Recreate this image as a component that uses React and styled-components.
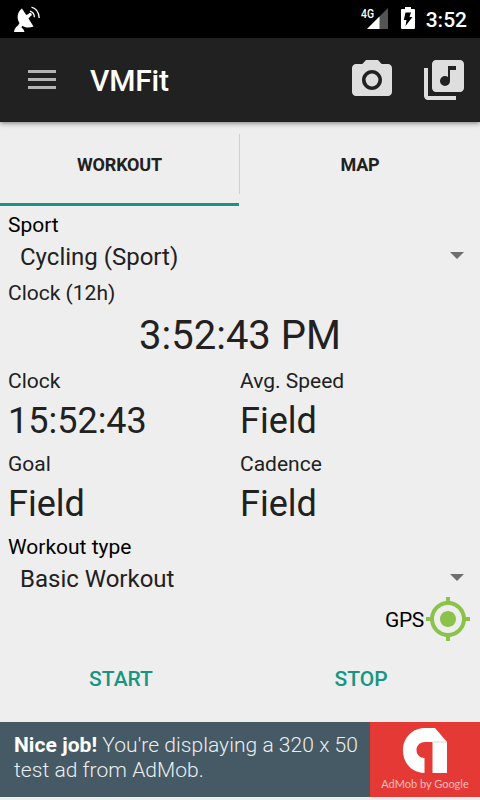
import React, { Component } from 'react';
import styled, { createGlobalStyle } from 'styled-components';
import { MdCameraAlt, MdLibraryMusic, MdGpsFixed } from 'react-icons/md';

const GlobalStyle = createGlobalStyle`
  * {
    box-sizing: border-box;
  }

  body {
    margin: 0;
    background: #eeeeee;
    color: #212121;
    font-family: Roboto, "Liberation Sans", sans-serif;
  }

  svg {
    display: block;
    flex: none;
  }
`;

const Screen = styled.div`
  width: 480px;
  height: 800px;
  display: flex;
  flex-direction: column;
  overflow: hidden;
`;

const StatusBar = styled.div`
  height: 38px;
  flex: none;
  display: flex;
  align-items: center;
  justify-content: space-between;
  padding: 0 13px 0 13px;
  background: #000;
`;

const StatusIcons = styled.div`
  display: flex;
  align-items: center;
`;

const Battery = styled.div`
  margin: 0 11px 0 12px;
  padding-bottom: 2px;
`;

const Time = styled.span`
  padding-top: 2px;
  color: #fff;
  font-size: 21px;
  font-weight: 500;
  line-height: 24px;
`;

const Toolbar = styled.header`
  height: 84px;
  flex: none;
  display: flex;
  align-items: center;
  padding: 0 12px 0 28px;
  background: #212121;
  box-shadow: 0 1px 5px rgba(0, 0, 0, .5);
`;

const MenuButton = styled.div`
  width: 28px;
  height: 20px;
  display: flex;
  flex-direction: column;
  justify-content: space-between;
  padding-bottom: 1px;
`;

const MenuLine = styled.span`
  height: 3px;
  background: #b4b4b4;
`;

const Title = styled.h1`
  flex: 1;
  margin: 0 0 0 34px;
  padding-top: 2px;
  color: #fff;
  font-size: 30px;
  font-weight: 500;
  letter-spacing: -.2px;
  line-height: 36px;
`;

const Actions = styled.div`
  display: flex;
  gap: 24px;
  color: #dedede;
`;

const Tabs = styled.nav`
  height: 84px;
  flex: none;
  display: flex;
`;

const Tab = styled.div`
  flex: ${({ active }) => ( active ? '0 0 239px' : 1 )};
  display: flex;
  align-items: center;
  justify-content: center;
  padding-top: ${({ active }) => ( active ? 4 : 1 )}px;
  border-bottom: ${({ active }) => ( active ? '3px solid #179482' : 'none' )};
  font-size: 18px;
  font-weight: 700;
  letter-spacing: -.2px;
`;

const TabDivider = styled.div`
  width: 1px;
  height: 60px;
  margin-top: 12px;
  background: #cfcfcf;
`;

const Content = styled.main`
  flex: 1;
  padding: 5px 8px 0;
`;

const Label = styled.div`
  color: ${({ $strong }) => ( $strong ? '#000' : '#212121' )};
  font-size: 21px;
  line-height: ${({ $height }) => $height || 28}px;
`;

const Spinner = styled.div`
  height: 36px;
  display: flex;
  align-items: center;
  justify-content: space-between;
  padding: 0 8px 0 12px;
  font-size: 24px;
  line-height: 36px;
`;

const Arrow = styled.span`
  margin-bottom: 3px;
  border: 7px solid transparent;
  border-top-color: #6f6f6f;
  border-bottom: 0;
`;

const MainValue = styled.div`
  font-size: 40px;
  line-height: 49px;
  text-align: center;
`;

const Fields = styled.div`
  display: grid;
  grid-template-columns: 232px 232px;
  row-gap: 3px;
  padding: 6px 0 4px;
`;

const FieldValue = styled.div`
  font-size: 36px;
  line-height: 50px;
`;

const GpsRow = styled.div`
  height: 44px;
  display: flex;
  align-items: center;
  justify-content: flex-end;
  color: #8bc34a;
`;

const GpsLabel = styled(Label)`
  padding-top: 2px;
  letter-spacing: -.3px;
`;

const Buttons = styled.div`
  display: flex;
  margin: 14px -9px 0 -7px;
`;

const Button = styled.button`
  flex: 1;
  height: 48px;
  padding: 0;
  border: 0;
  background: none;
  color: #179482;
  font-family: inherit;
  font-size: 21px;
  font-weight: 500;
  cursor: pointer;
`;

const Ad = styled.div`
  height: 75px;
  flex: none;
  display: flex;
  margin-bottom: 3px;
  background: #455a64;
`;

const AdText = styled.p`
  flex: 1;
  margin: 0;
  padding: 11px 0 0 14px;
  color: #eceff1;
  font-size: 21px;
  font-weight: 300;
  letter-spacing: .05px;
  line-height: 25px;
  white-space: nowrap;

  b {
    color: #fff;
    font-weight: 700;
  }
`;

const AdLogo = styled.div`
  width: 110px;
  display: flex;
  flex-direction: column;
  align-items: center;
  padding-top: 5px;
  background: #e53935;
  color: #f8bfbd;
  font-family: Lato, sans-serif;
  font-size: 11px;
  line-height: 14px;
  white-space: nowrap;

  svg {
    margin-bottom: 4px;
  }
`;

const SatelliteIcon = () => (
  <svg width="28" height="28" viewBox="0 0 28 28" fill="#fff">
    <path d="M9 3.500C4 7 3.500 13.500 6.500 18L5 20.500Q1.500 22.500 1 27H11.500Q11 24 8.500 22.500L9.300 20.800C12 22.800 16.500 23.200 20.500 21.500L15.500 13.500L17.500 11.200A1.700 1.700 0 1 0 15.500 9L13.200 10Z" />
    <path d="M17 6.200Q21.200 7.500 21.400 12.200M18.500 2.200Q25.500 4 26.200 13" fill="none" stroke="#fff" strokeWidth="1.300" />
  </svg>
);

const SignalIcon = () => (
  <svg width="28" height="24" viewBox="0 0 28 24">
    <path d="M27 1V22H6Z" fill="#545454" />
    <path d="M18.500 9.500V22H6Z" fill="#fff" />
    <text x="0" y="10.500" fill="#fff" fontSize="12.500" fontWeight="500" textLength="13" lengthAdjust="spacingAndGlyphs">4G</text>
  </svg>
);

const BatteryIcon = () => (
  <svg width="14" height="22" viewBox="0 0 14 22">
    <path d="M4 0H10V2H13Q14 2 14 3V21Q14 22 13 22H1Q0 22 0 21V3Q0 2 1 2H4Z" fill="#fff" />
    <path d="M4.500 5.500H10L8.500 10H11.500L4.500 19L5.500 13H2.800Z" fill="#000" />
  </svg>
);

const AdMobIcon = () => (
  <svg width="46" height="46" viewBox="0 0 46 46">
    <path d="M23 1H33L45 15V46H30.500V15H23.500C18 15 14.500 18.500 14.500 23C14.500 27.500 18 31 22.500 31V46C9 45.500 1 35.500 1 23.500C1 10.500 10.500 1 23 1Z" fill="#fff" />
    <path d="M30.500 15H44" stroke="#d8d8d8" strokeWidth="1" />
  </svg>
);

const fields = [
  { label: 'Clock', value: '15:52:43' },
  { label: 'Avg. Speed', value: 'Field' },
  { label: 'Goal', value: 'Field' },
  { label: 'Cadence', value: 'Field' },
];

class App extends Component {
  render() {
    return (
      <Screen>
        <GlobalStyle />
        <StatusBar>
          <SatelliteIcon />
          <StatusIcons>
            <SignalIcon />
            <Battery>
              <BatteryIcon />
            </Battery>
            <Time>3:52</Time>
          </StatusIcons>
        </StatusBar>
        <Toolbar>
          <MenuButton>
            <MenuLine />
            <MenuLine />
            <MenuLine />
          </MenuButton>
          <Title>VMFit</Title>
          <Actions>
            <MdCameraAlt size={48} />
            <MdLibraryMusic size={48} />
          </Actions>
        </Toolbar>
        <Tabs>
          <Tab active>WORKOUT</Tab>
          <TabDivider />
          <Tab>MAP</Tab>
        </Tabs>
        <Content>
          <Label $strong>Sport</Label>
          <Spinner>Cycling (Sport)<Arrow /></Spinner>
          <Label $height={36}>Clock (12h)</Label>
          <MainValue>3:52:43 PM</MainValue>
          <Fields>
            {
              fields.map(({ label, value }) => (
                <div key={label}>
                  <Label $height={30}>{label}</Label>
                  <FieldValue>{value}</FieldValue>
                </div>
              ))
            }
          </Fields>
          <Label $strong>Workout type</Label>
          <Spinner>Basic Workout<Arrow /></Spinner>
          <GpsRow>
            <GpsLabel $strong $height={30}>GPS</GpsLabel>
            <MdGpsFixed size={48} />
          </GpsRow>
          <Buttons>
            <Button>START</Button>
            <Button>STOP</Button>
          </Buttons>
        </Content>
        <Ad>
          <AdText>
            <b>Nice job!</b> You're displaying a 320 x 50<br />
            test ad from AdMob.
          </AdText>
          <AdLogo>
            <AdMobIcon />
            <span>AdMob by Google</span>
          </AdLogo>
        </Ad>
      </Screen>
    );
  }
}

export default App;
